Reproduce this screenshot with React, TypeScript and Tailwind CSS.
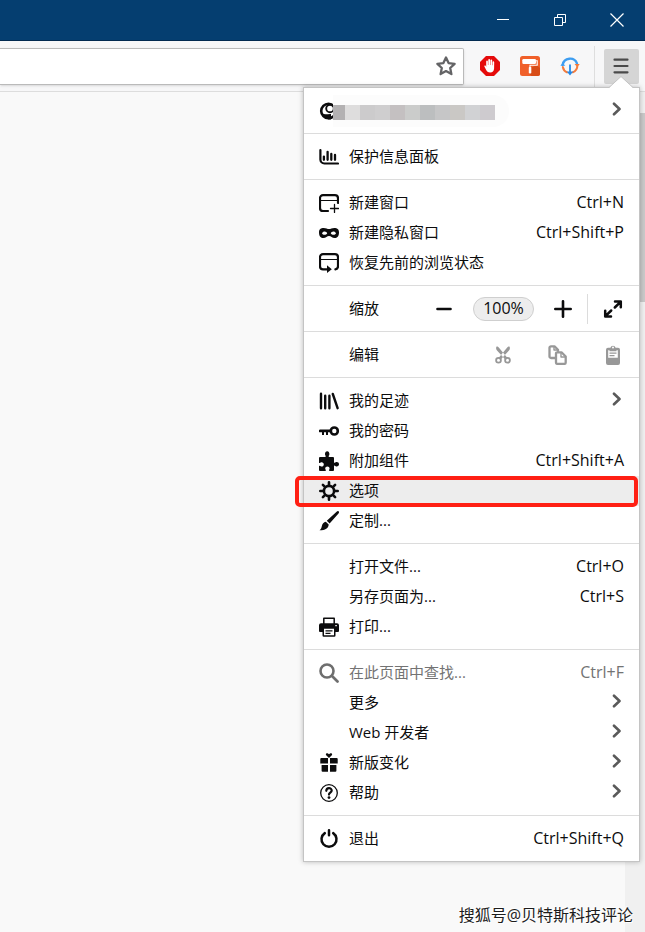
import React from 'react';

type IconProps = { children: React.ReactNode; className?: string };

const Icon: React.FC<IconProps> = ({ children, className = '' }) => (
  <svg viewBox="0 0 20 20" className={`w-5 h-5 shrink-0 ${className}`} fill="currentColor" aria-hidden="true">
    {children}
  </svg>
);

const stroke = { fill: 'none', stroke: 'currentColor', strokeLinecap: 'round', strokeLinejoin: 'round' } as const;

const icons = {
  dashboard: (
    <Icon>
      <path {...stroke} strokeWidth="2.200" d="M1.400 3v9.500a4 4 0 0 0 4 4H19" />
      <path {...stroke} strokeWidth="2.300" d="M4.900 9.600v3.200M8.600 4.800v8M12.300 7v5.800M16 8v4.800" />
    </Icon>
  ),
  newWindow: (
    <Icon>
      <path {...stroke} strokeWidth="2.200" d="M9 18H4a3 3 0 0 1-3-3V5.200a3 3 0 0 1 3-3h12a3 3 0 0 1 3 3V10" />
      <path {...stroke} strokeWidth="1" d="M2 7.500h16" />
      <path {...stroke} strokeWidth="1.300" d="M15.500 11.500v8M11.500 15.500h8" />
    </Icon>
  ),
  mask: (
    <Icon>
      <path
        fillRule="evenodd"
        d="M4.600 5C2 5 0 6 0 9.400c0 3.600 1.900 5.700 4.300 5.700 2.700 0 3.700-2.100 5.700-2.100s3 2.100 5.700 2.100c2.400 0 4.300-2.100 4.300-5.700C20 6 18 5 15.400 5c-2.500 0-3.800 1.100-5.400 1.100S7.100 5 4.600 5zM3 10.200c.6-1 1.500-1.600 2.600-1.600 1.300 0 2.200.8 2.600 1.800-.6.9-1.600 1.400-2.800 1.400-1 0-1.900-.6-2.400-1.600zm8.800.2c.4-1 1.300-1.800 2.600-1.800 1.100 0 2 .6 2.600 1.600-.5 1-1.400 1.600-2.400 1.600-1.200 0-2.200-.5-2.800-1.400z"
      />
    </Icon>
  ),
  restore: (
    <Icon>
      <path {...stroke} strokeWidth="2.200" d="M9 16.300H4a3 3 0 0 1-3-3V4.200a3 3 0 0 1 3-3h12a3 3 0 0 1 3 3v9.100a3 3 0 0 1-2.600 3" />
      <path {...stroke} strokeWidth="1" d="M2 6.500h16" />
      <path d="M8 12.300 12.800 16.200 8 20z" />
    </Icon>
  ),
  library: (
    <Icon>
      <path {...stroke} strokeWidth="2.400" d="M2 2.700v14.600M6.200 4.700v12.600M10.400 4.700v12.600M13.800 3l4.800 14.200" />
    </Icon>
  ),
  key: (
    <Icon>
      <circle cx="15.300" cy="10" r="3.500" {...stroke} strokeWidth="2.600" />
      <path d="M1 8.600h11v2.700H9V14H7v-2.700H5V14H3v-2.700H1a1.350 1.350 0 0 1 0-2.700z" />
    </Icon>
  ),
  puzzle: (
    <Icon>
      <path d="M1 6h5.200c.5 0 .7-.4.5-.9-.3-.6-.7-1-.7-2C6 1.500 6.900.300 8.200.300s2.200 1.200 2.200 2.800c0 1-.4 1.400-.7 2-.2.5 0 .9.500.9H14a1 1 0 0 1 1 1v4.200c0 .5.4.7.9.5.5-.3.900-.7 1.800-.7 1.300 0 2.300.9 2.300 2.200s-1 2.200-2.300 2.200c-.9 0-1.300-.4-1.800-.7-.5-.2-.9 0-.9.500V19a1 1 0 0 1-1 1h-3.500c-.5 0-.7-.4-.5-.9.3-.5.600-.9.600-1.600 0-1.200-1-2-2.200-2s-2.200.8-2.200 2c0 .7.300 1.100.6 1.600.2.500 0 .9-.5.900H1a1 1 0 0 1-1-1v-3.700c0-.5.4-.7.9-.5.5.3.900.7 1.800.7 1.200 0 2.100-.9 2.100-2.100s-.9-2.200-2.100-2.200c-.9 0-1.300.4-1.800.7-.5.200-.9 0-.9-.500V7a1 1 0 0 1 1-1z" />
    </Icon>
  ),
  gear: (
    <Icon>
      <circle cx="10" cy="10" r="5.100" {...stroke} strokeWidth="2.600" />
      <path
        {...stroke}
        strokeWidth="2.600"
        d="M10 1.300v3M10 15.700v3M1.300 10h3M15.700 10h3M3.900 3.900l2 2M14.100 14.100l2 2M3.900 16.100l2-2M14.100 5.900l2-2"
      />
    </Icon>
  ),
  brush: (
    <Icon>
      <path d="M19.700.400c.6.600.3 1.300-.2 2l-8.900 10-2.800-2.700L17.600.700c.7-.6 1.500-.9 2.100-.300zM6.800 10.700l2.900 2.700c-.2 3.700-3.200 5.900-9.200 5.900 1.500-1 1.900-2.200 2.300-4 .5-2.600 1.800-4.100 4-4.600z" />
    </Icon>
  ),
  printer: (
    <Icon>
      <path {...stroke} strokeWidth="1.500" d="M4.800 7V1.200h10.400V7" />
      <path fillRule="evenodd" d="M2 6.200h16a2 2 0 0 1 2 2V14a1 1 0 0 1-1 1h-2.500v3.500a1.200 1.200 0 0 1-1.200 1.200H4.700a1.200 1.200 0 0 1-1.200-1.200V15H1a1 1 0 0 1-1-1V8.200a2 2 0 0 1 2-2zm3 5.600v6.400h10v-6.400zM16.300 8v1.300h1.500V8z" />
      <path d="M6.500 13.300h7v1.200h-7zM6.500 15.800h5v1.200h-5z" />
    </Icon>
  ),
  search: (
    <Icon className="text-[#6e6e6e]">
      <circle cx="8" cy="8" r="6.500" {...stroke} strokeWidth="2.600" />
      <path {...stroke} strokeWidth="2.700" d="m13 13 5.500 5.500" />
    </Icon>
  ),
  gift: (
    <Icon>
      <path d="M10 5 7.200 2.200C6.200 1 7.700-.400 9 .500l1 .8 1-.8c1.300-.9 2.800.5 1.800 1.700z" />
      <path d="M2.300 5H9v5.500H1.300V6a1 1 0 0 1 1-1zM11 5h6.700a1 1 0 0 1 1 1v4.500H11zM2.600 12H9v6.700H3.600a1 1 0 0 1-1-1zM11 12h6.400v5.700a1 1 0 0 1-1 1H11z" />
    </Icon>
  ),
  help: (
    <Icon>
      <circle cx="10" cy="10" r="8.300" {...stroke} strokeWidth="1.300" />
      <path {...stroke} strokeWidth="2.200" d="M7.300 7.800c0-3.500 5.400-3.500 5.400-.2 0 2-2.700 2.100-2.700 4" />
      <circle cx="10" cy="14.600" r="1.400" />
    </Icon>
  ),
  power: (
    <Icon>
      <path {...stroke} strokeWidth="2.500" d="M5.800 4.100a7.500 7.500 0 1 0 8.400 0M10 1.300v5" />
    </Icon>
  ),
};

type Item = {
  label: string;
  icon?: React.ReactNode;
  shortcut?: string;
  submenu?: boolean;
  muted?: boolean;
  selected?: boolean;
};

const windowItems: Item[] = [
  { label: '新建窗口', icon: icons.newWindow, shortcut: 'Ctrl+N' },
  { label: '新建隐私窗口', icon: icons.mask, shortcut: 'Ctrl+Shift+P' },
  { label: '恢复先前的浏览状态', icon: icons.restore },
];

const libraryItems: Item[] = [
  { label: '我的足迹', icon: icons.library, submenu: true },
  { label: '我的密码', icon: icons.key },
  { label: '附加组件', icon: icons.puzzle, shortcut: 'Ctrl+Shift+A' },
  { label: '选项', icon: icons.gear, selected: true },
  { label: '定制...', icon: icons.brush },
];

const fileItems: Item[] = [
  { label: '打开文件...', shortcut: 'Ctrl+O' },
  { label: '另存页面为...', shortcut: 'Ctrl+S' },
  { label: '打印...', icon: icons.printer },
];

const toolItems: Item[] = [
  { label: '在此页面中查找...', icon: icons.search, shortcut: 'Ctrl+F', muted: true },
  { label: '更多', submenu: true },
  { label: 'Web 开发者', submenu: true },
  { label: '新版变化', icon: icons.gift, submenu: true },
  { label: '帮助', icon: icons.help, submenu: true },
];

const mosaic = [
  'bg-[#dedddd]', 'bg-[#cccbcc]', 'bg-[#cfcecf]', 'bg-[#c4c0c1]', 'bg-[#cbcccb]',
  'bg-[#bcbebf]', 'bg-[#c6c6c7]', 'bg-[#cac8c5]', 'bg-[#d1d2d4]', 'bg-[#cecbcf]',
];

const Chevron = () => (
  <svg viewBox="0 0 10 14" className="w-[10px] h-[14px] mr-[2px] mb-[3px] text-[#5a5a5a]" aria-hidden="true">
    <path {...stroke} strokeWidth="2.600" d="M2 1.700 7.500 7 2 12.300" />
  </svg>
);

const Row: React.FC<{ item: Item }> = ({ item }) => (
  <button
    className={`relative flex items-center w-full h-[30px] px-[15px] text-left hover:bg-[#ededed] ${item.selected ? 'bg-[#ededed]' : ''} ${item.muted ? 'text-[#737373]' : ''}`}
  >
    <span className="w-[30px] shrink-0">{item.icon}</span>
    <span className="flex-1 pb-[2px]">{item.label}</span>
    {item.shortcut && <span className="pb-[2px] text-[16px] leading-5">{item.shortcut}</span>}
    {item.submenu && <Chevron />}
    {item.selected && (
      <span className="absolute top-0 -left-[9px] right-px h-[31px] rounded-[5px] border-4 border-[#ff2014]" />
    )}
  </button>
);

const Section: React.FC<{ children: React.ReactNode }> = ({ children }) => (
  <div className="pt-2 pb-[7px] border-b border-[#dcdcdc] last:border-b-0">{children}</div>
);

const AppMenu = () => (
  <nav className="absolute top-[38px] -right-px w-[337px] bg-white border border-[#c4c4c4] shadow-[0_0_5px_rgba(0,0,0,0.25)] text-[15px] leading-5 text-[#0c0c0d] z-10">
    {/* pointer towards the menu button */}
    <svg viewBox="0 0 24 12" className="absolute -top-[12px] right-[6px] w-6 h-3" aria-hidden="true">
      <path d="M0 12 12 .500 24 12z" fill="#fff" />
      <path d="M0 11.500 12 .500 24 11.500" fill="none" stroke="#c4c4c4" />
    </svg>

    <Section>
      <button className="flex items-center w-full h-[30px] px-[15px]" aria-label="account">
        <Icon>
          <circle cx="9.500" cy="10" r="7.300" {...stroke} strokeWidth="2.600" />
          <circle cx="11" cy="7.500" r="3.800" {...stroke} strokeWidth="1.900" />
          <path d="M3.500 12.500c2 1.500 5 .3 8.500.4v5.600c-4 .4-7.500-2-8.500-6z" />
        </Icon>
        <span className="relative flex flex-1 -ml-[6px] mt-1">
          <span className="absolute -top-[10px] left-0 w-[176px] h-8 rounded-r-full bg-[#fcfcfc]" />
          <span className="relative w-3 h-[15px] bg-[#b3b1b2]" />
          {mosaic.map((tone) => (
            <span key={tone} className={`relative w-[15px] h-[15px] ${tone}`} />
          ))}
        </span>
        <Chevron />
      </button>
    </Section>

    <Section>
      <Row item={{ label: '保护信息面板', icon: icons.dashboard }} />
    </Section>

    <Section>
      {windowItems.map((item) => <Row key={item.label} item={item} />)}
    </Section>

    <Section>
      <div className="flex items-center h-[30px] pl-[45px] pr-4">
        <span className="flex-1 pb-[2px]">缩放</span>
        <button aria-label="缩小">
          <Icon><path {...stroke} strokeWidth="2.600" d="M3.500 10h13" /></Icon>
        </button>
        <button className="w-[61px] h-6 mx-[19px] pb-[2px] rounded-full border border-[#cfcfcf] bg-[#ededed] text-[16px] leading-5">
          100%
        </button>
        <button aria-label="放大">
          <Icon><path {...stroke} strokeWidth="2.600" d="M2.300 10h15.400M10 2.300v15.400" /></Icon>
        </button>
        <span className="w-px h-[30px] ml-[14px] mr-[15px] bg-[#dcdcdc]" />
        <button aria-label="全屏">
          <Icon>
            <path {...stroke} strokeWidth="2.500" d="M12 2.500h5.800v5.800M17.500 2.800l-5.700 5.700M8 17.500H2.200v-5.800M2.500 17.200l5.700-5.700" />
          </Icon>
        </button>
      </div>
    </Section>

    <Section>
      <div className="flex items-center h-[30px] pl-[45px] pr-4 text-[#989898]">
        <span className="flex-1 pb-[2px] text-[#0c0c0d]">编辑</span>
        <button aria-label="剪切">
          <Icon>
            <circle cx="5.500" cy="15.300" r="2.400" {...stroke} strokeWidth="1.800" />
            <circle cx="14.500" cy="15.300" r="2.400" {...stroke} strokeWidth="1.800" />
            <path d="M3.600 1.500c1.400 0 2.100.7 2.600 1.500l8.500 10.300-2.200 1.400L4 5.500c-.9-1.100-1.300-2.600-.4-4zM16.400 1.500c-1.400 0-2.100.7-2.600 1.500L5.300 13.300l2.200 1.400L16 5.500c.9-1.100 1.300-2.600.4-4z" />
          </Icon>
        </button>
        <button aria-label="复制" className="mx-[35px]">
          <Icon>
            <path {...stroke} strokeWidth="2.300" d="M7 13H3a1.500 1.500 0 0 1-1.500-1.500V2.800A1.500 1.500 0 0 1 3 1.300h3.500L10 4.800V6" />
            <path {...stroke} strokeWidth="1.400" d="M6 1.800V5h3" />
            <path {...stroke} strokeWidth="2.300" d="M9.200 7.300h4.300l4.200 4.200v6.100a1.300 1.300 0 0 1-1.300 1.300H9.200A1.300 1.300 0 0 1 8 17.600V8.500a1.200 1.200 0 0 1 1.200-1.200z" />
            <path {...stroke} strokeWidth="1.400" d="M13 8v4h4" />
          </Icon>
        </button>
        <button aria-label="粘贴">
          <Icon>
            <path fillRule="evenodd" d="M5 2.700h2.400a2.700 2.700 0 0 1 5.200 0H15a2 2 0 0 1 2 2V18a2 2 0 0 1-2 2H5a2 2 0 0 1-2-2V4.700a2 2 0 0 1 2-2zm5-1.300a1 1 0 1 0 0 2 1 1 0 0 0 0-2zM5.200 5.300v7.500h9.600V5.300h-1.300v1h-7v-1z" />
            <path d="M6.500 7.500h7v1.200h-7zM6.500 10h5v1.200h-5z" />
          </Icon>
        </button>
      </div>
    </Section>

    <Section>
      {libraryItems.map((item) => <Row key={item.label} item={item} />)}
    </Section>
    <Section>
      {fileItems.map((item) => <Row key={item.label} item={item} />)}
    </Section>
    <Section>
      {toolItems.map((item) => <Row key={item.label} item={item} />)}
    </Section>
    <Section>
      <Row item={{ label: '退出', icon: icons.power, shortcut: 'Ctrl+Shift+Q' }} />
    </Section>
  </nav>
);

const TitleBar = () => (
  <header className="flex justify-end h-[41px] bg-[#053e70] border-b border-[#022a50] text-white">
    <button className="w-[57px] flex items-center justify-center" aria-label="最小化">
      <svg viewBox="0 0 12 12" className="w-3 h-3"><path d="M0 5.500h12" stroke="currentColor" /></svg>
    </button>
    <button className="w-[57px] flex items-center justify-center" aria-label="还原">
      <svg viewBox="0 0 12 12" className="w-3 h-3" fill="none" stroke="currentColor">
        <path d="M.500 3.500h8v8h-8zM3.500 3.500v-3h8v8h-3" />
      </svg>
    </button>
    <button className="w-[57px] flex items-center justify-center" aria-label="关闭">
      <svg viewBox="0 0 14 14" className="w-[14px] h-[14px]"><path d="m.500.500 13 13m0-13-13 13" stroke="currentColor" strokeWidth="1.200" /></svg>
    </button>
  </header>
);

const Toolbar = () => (
  <div className="flex items-center h-[51px] pr-[6px] bg-[#f7f7f8] border-b border-[#dddddd]">
    <div className="flex flex-1 items-center h-[37px] pr-[7px] bg-white border border-l-0 border-[#bababa] rounded-r-[2px] shadow-sm">
      <input aria-label="地址" className="flex-1 min-w-0 h-full px-2 outline-none" />
      <button aria-label="收藏" className="text-[#646466]">
        <Icon>
          <path {...stroke} strokeWidth="2.300" d="m10 1.500 2.600 5.600 6 .7-4.400 4.200 1.200 6.100-5.400-3-5.400 3L5.800 12 1.400 7.800l6-.7z" />
        </Icon>
      </button>
    </div>

    <div className="flex items-center ml-[6px]">
      <button className="w-10 flex justify-center" aria-label="AdBlock">
        <Icon>
          <path fill="#e50b0b" d="M6 0h8l6 6v8l-6 6H6l-6-6V6z" />
          <path
            fill="#fff"
            d="M6.200 11V5.400c0-1.200 1.600-1.200 1.700 0V9h.4V3.800c0-1.200 1.700-1.200 1.800 0V9h.4V4.300c0-1.200 1.700-1.200 1.700 0v5h.4V6.200c0-1.200 1.600-1.100 1.600 0l-.1 6.300c-.2 2.700-1.500 4-3.900 4-2.300 0-3.400-1.200-4.300-3l-1.500-3c-.4-1 .7-1.500 1.300-.7z"
          />
        </Icon>
      </button>
      <button className="w-10 flex justify-center" aria-label="主题">
        <Icon>
          <rect width="20" height="20" rx="2.500" fill="#f0602a" />
          <path d="M11.300 11.500 16.800 9 20 12v5.500a2.500 2.500 0 0 1-2.500 2.500H11.500L9 17.500z" fill="#d84d18" />
          <rect x="2.300" y="3" width="13.700" height="5" rx="1.300" fill="#fff" />
          <path d="M15.500 4.800h1.700v4.400H10V12" fill="none" stroke="#fff" strokeWidth="1.100" />
          <rect x="8.800" y="11" width="2.500" height="6.500" rx=".800" fill="#fff" />
        </Icon>
      </button>
      <button className="w-10 flex justify-center" aria-label="下载">
        <Icon>
          <path {...stroke} stroke="#3d9df0" strokeWidth="2.300" d="M2.600 9a7.500 7.500 0 0 1 14.400-1.500" />
          <path {...stroke} stroke="#f47b3b" strokeWidth="2" d="M17.400 9.500a7.500 7.500 0 0 1-4.600 6.800M2.800 11a7.500 7.500 0 0 0 4.200 5.400" />
          <path fill="#3d9df0" d="M.300 9.800 2.800 7l2.500 2.800z" />
          <path fill="#f47b3b" d="M14.500 8h5.300l-2.600 3z" />
          <path d="M10 8.500V17" stroke="#2389e8" strokeWidth="1.800" />
          <path d="M6.800 15.500h6.400L10 19.600z" fill="#2389e8" />
        </Icon>
      </button>
    </div>

    <span className="w-px h-[41px] ml-1 mr-[9px] bg-[#dedede]" />

    <div className="relative">
      <button className="flex items-center justify-center w-[35px] h-[35px] pr-px rounded-[2px] bg-[#d5d5d5] text-[#4a4a4a]" aria-label="打开菜单">
        <Icon>
          <path {...stroke} strokeWidth="2.200" d="M3.500 3.700h13M3.500 10h13M3.500 16.300h13" />
        </Icon>
      </button>
      <AppMenu />
    </div>
  </div>
);

export default function App() {
  return (
    <div className="flex flex-col min-h-screen bg-[#f9f9f9] font-['Open_Sans','Noto_Sans_CJK_SC',sans-serif]">
      <TitleBar />
      <Toolbar />
      <main className="flex flex-1 items-stretch">
        <div className="flex flex-1 items-end justify-end">
          <p className="-mr-[8px] mb-[5px] text-[16px] leading-6 whitespace-nowrap text-[#1d1d1d] z-10 [text-shadow:1px_1px_0_#fff,-1px_-1px_0_#fff]">
            搜狐号@贝特斯科技评论
          </p>
        </div>
        <div className="w-5 bg-[#f0f0f0] pt-[21px]">
          <div className="h-[189px] bg-[#c9c9c9]" />
        </div>
      </main>
    </div>
  );
}
